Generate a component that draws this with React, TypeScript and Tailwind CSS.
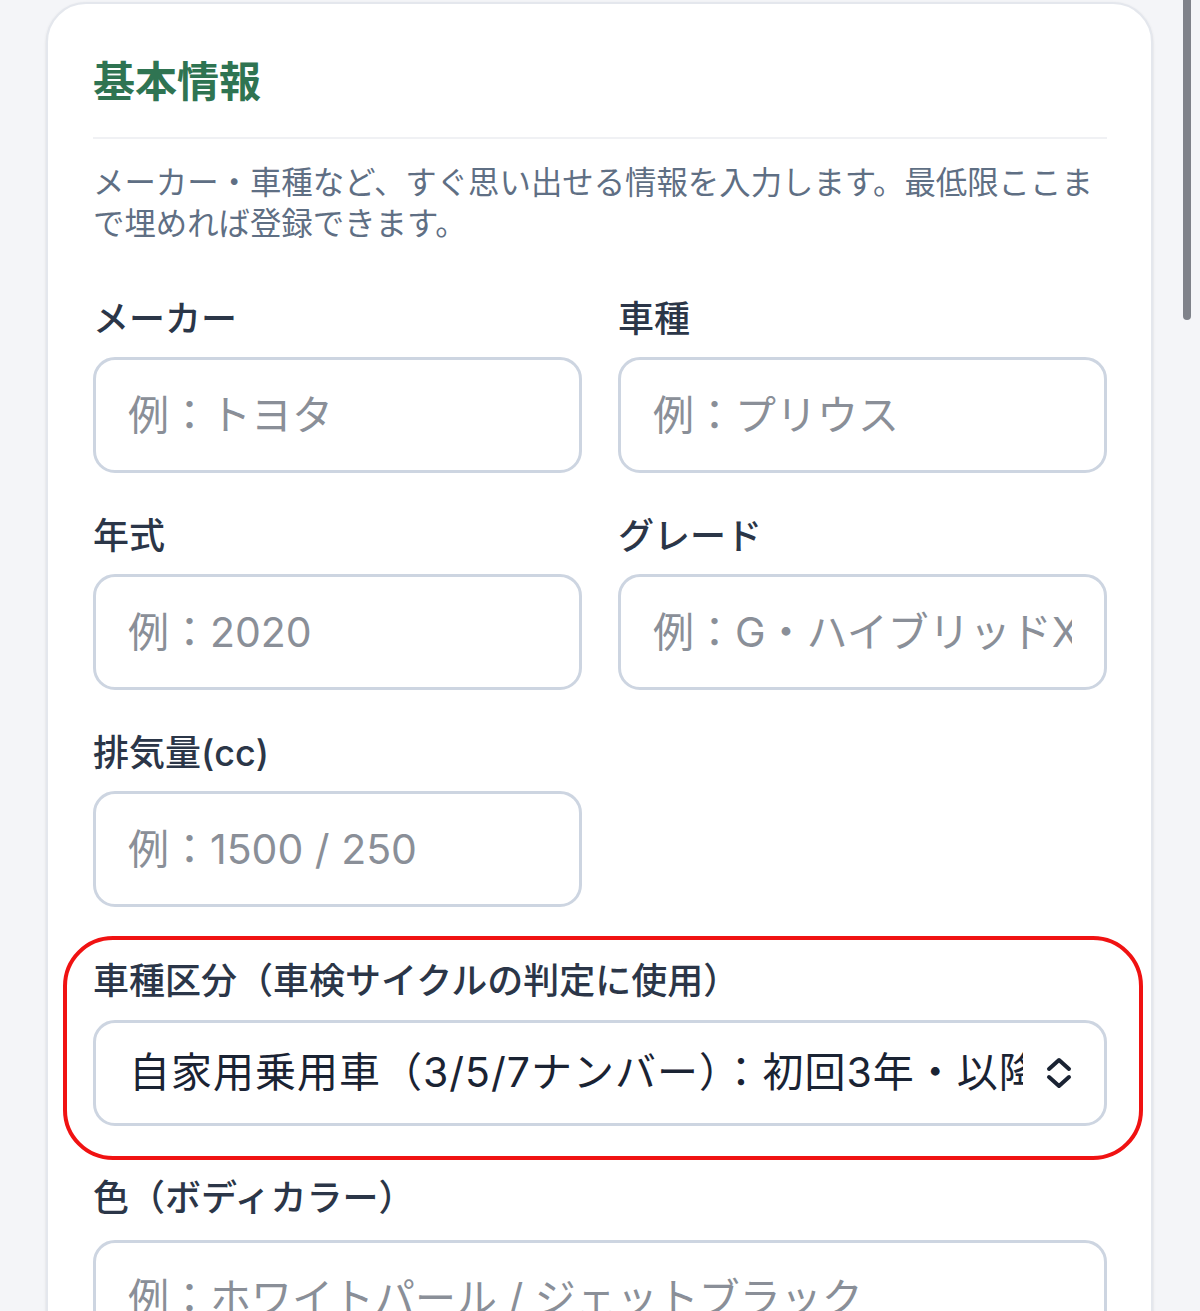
import React from "react";

const font = { fontFamily: 'Inter, "Noto Sans CJK JP", "Noto Sans", sans-serif' };

function Field({ label, placeholder }: { label: string; placeholder: string }) {
  return (
    <div className="flex flex-col">
      <label className="text-[36px] leading-[48px] font-medium text-[#2b3648]">{label}</label>
      <input
        readOnly
        placeholder={placeholder}
        className="mt-[14px] w-full h-[116px] rounded-[22px] border-[3px] border-[#cdd5e1] bg-white px-[32px] text-[41px] text-[#1e293b] placeholder:text-[#8a8f98] outline-none"
        style={font}
      />
    </div>
  );
}

export default function App() {
  return (
    <div className="relative h-[1311px] overflow-hidden bg-[#f4f5f8] pl-[46px] pr-[47px] pt-[2px]" style={font}>
      <div className="rounded-[40px] border-2 border-[#e4e7ed] bg-white pl-[45px] pr-[44px] pt-[48px] pb-[60px] shadow-sm">
        <h2 className="text-[42px] leading-[60px] font-bold text-[#2f7452]">基本情報</h2>
        <div className="mt-[25px] h-[2px] bg-[#f0f1f4]" />
        <p className="mt-[24px] text-[31.4px] leading-[41px] text-[#5f6f84]">
          メーカー・車種など、すぐ思い出せる情報を入力します。最低限ここまで埋めれば登録できます。
        </p>

        <div className="mt-[50px] grid grid-cols-2 gap-x-[36px] gap-y-[39px]">
          <Field label="メーカー" placeholder="例：トヨタ" />
          <Field label="車種" placeholder="例：プリウス" />
          <Field label="年式" placeholder="例：2020" />
          <Field label="グレード" placeholder="例：G・ハイブリッドX" />
          <Field label="排気量(cc)" placeholder="例：1500 / 250" />
        </div>

        <div className="relative mt-[50px] flex flex-col">
          <label className="text-[36px] leading-[48px] font-medium text-[#2b3648]">車種区分（車検サイクルの判定に使用）</label>
          <div className="mt-[15px] flex h-[106px] w-full items-center rounded-[22px] border-[3px] border-[#cdd5e1] bg-white pl-[33px] pr-[31px]">
            <span className="min-w-0 flex-1 overflow-hidden whitespace-nowrap text-[41px] tracking-[1px] text-[#1a2333]">
              自家用乗用車（3/5/7ナンバー）：初回3年・以降2年
            </span>
            <svg width="28" height="34" viewBox="0 0 28 34" className="ml-[22px] shrink-0" fill="none" stroke="#1a2333" strokeWidth="4" strokeLinecap="round" strokeLinejoin="round">
              <path d="M4 13 L14 4 L24 13" />
              <path d="M4 21 L14 30 L24 21" />
            </svg>
          </div>
          <div className="pointer-events-none absolute -left-[30px] -right-[36px] -top-[21px] -bottom-[34px] rounded-[50px] border-4 border-[#f01212]" />
        </div>

        <div className="mt-[48px]">
          <label className="text-[36px] leading-[48px] font-medium text-[#2b3648]">色（ボディカラー）</label>
          <input
            readOnly
            placeholder="例：ホワイトパール / ジェットブラック"
            className="mt-[18px] w-full h-[116px] rounded-[22px] border-[3px] border-[#cdd5e1] bg-white px-[32px] text-[41px] placeholder:text-[#8a8f98] outline-none"
            style={font}
          />
        </div>
      </div>

      <div className="absolute right-[9px] top-[-10px] h-[330px] w-[8px] rounded-full bg-[#7f828a]" />
    </div>
  );
}
